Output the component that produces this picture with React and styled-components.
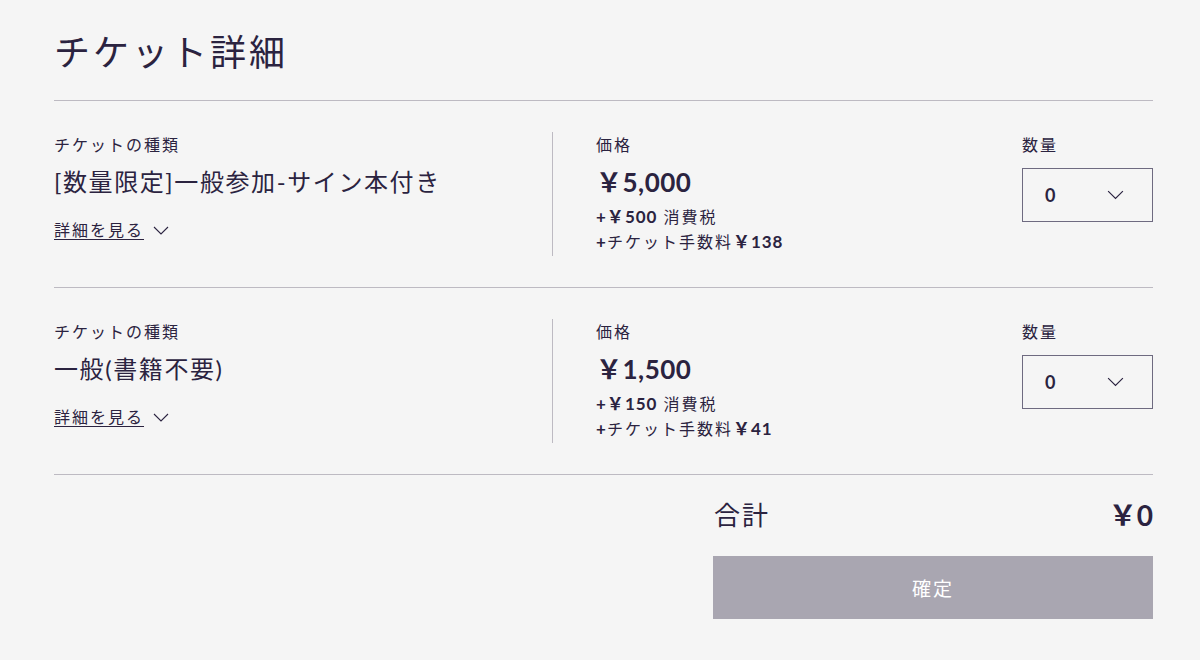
import React from "react";
import styled, { createGlobalStyle } from "styled-components";

const GlobalStyle = createGlobalStyle`
  html, body {
    margin: 0;
    padding: 0;
    background: #f5f5f5;
  }
  body {
    font-family: Lato, "Noto Sans CJK JP", sans-serif;
    color: #2b2340;
  }
`;

const Page = styled.div`
  padding: 0 47px 0 54px;
`;

const Header = styled.div`
  padding-top: 28px;
  border-bottom: 1px solid #bdbac2;
`;

const Title = styled.h1`
  margin: 0;
  font-size: 36px;
  line-height: 48px;
  font-weight: 400;
  letter-spacing: 3px;
  height: 72px;
`;

const Row = styled.div`
  display: flex;
  padding: 31px 0;
  border-bottom: 1px solid #bdbac2;
`;

const TypeCol = styled.div`
  width: 498px;
  height: 124px;
  border-right: 1px solid #bdbac2;
`;

const PriceCol = styled.div`
  flex: 1;
  padding-left: 43px;
`;

const QtyCol = styled.div`
  width: 131px;
`;

const Label = styled.div`
  padding-top: 2px;
  font-size: 16px;
  line-height: 22px;
  letter-spacing: 2px;
`;

const Name = styled.div`
  margin-top: 8px;
  font-size: 24px;
  line-height: 36px;
  letter-spacing: 1.6px;
`;

const Price = styled.div`
  margin-top: 8px;
  font-size: 26px;
  line-height: 36px;
  font-weight: 700;
  letter-spacing: 0.5px;
`;

const Fee = styled.div`
  margin-top: ${({ first }) => (first ? "4px" : "0")};
  font-size: 16px;
  line-height: 25px;
  letter-spacing: 2px;
`;

const Num = styled.b`
  font-size: 17px;
  font-weight: 700;
  letter-spacing: 1px;
`;

const DetailLink = styled.a`
  display: inline-flex;
  align-items: center;
  gap: 9px;
  margin-top: 19px;
  font-size: 16px;
  line-height: 22px;
  letter-spacing: 2px;
  color: #2b2340;
  cursor: pointer;

  span {
    text-decoration: underline;
    text-underline-offset: 3px;
  }
`;

const Select = styled.div`
  box-sizing: border-box;
  margin-top: 12px;
  height: 54px;
  border: 1px solid #6e6a80;
  display: flex;
  align-items: center;
  justify-content: space-between;
  padding: 0 28px 0 22px;
  font-size: 18px;
  font-weight: 700;
`;

const Summary = styled.div`
  margin-left: auto;
  width: 440px;
  padding-top: 22px;
`;

const TotalRow = styled.div`
  display: flex;
  justify-content: space-between;
  align-items: center;
  height: 36px;
  padding-left: 1px;
`;

const TotalLabel = styled.div`
  font-size: 26px;
  line-height: 36px;
  letter-spacing: 2px;
`;

const TotalValue = styled.div`
  font-size: 28px;
  line-height: 36px;
  font-weight: 700;
`;

const Confirm = styled.button`
  display: block;
  width: 100%;
  height: 63px;
  margin-top: 23px;
  border: none;
  background: #a9a6b1;
  color: #fff;
  font-family: Lato, "Noto Sans CJK JP", sans-serif;
  font-size: 19px;
  letter-spacing: 2px;
`;

const Chevron = ({ size = 16 }) => (
  <svg width={size} height={size / 2 + 1} viewBox="0 0 16 9" fill="none">
    <polyline points="1,1 8,8 15,1" stroke="#2b2340" strokeWidth="1.1" />
  </svg>
);

const tickets = [
  { name: "[数量限定]一般参加-サイン本付き", price: "5,000", tax: "500", fee: "138" },
  { name: "一般(書籍不要)", price: "1,500", tax: "150", fee: "41" },
];

export default function App() {
  return (
    <Page>
      <GlobalStyle />
      <Header>
        <Title>チケット詳細</Title>
      </Header>
      {tickets.map((t) => (
        <Row key={t.name}>
          <TypeCol>
            <Label>チケットの種類</Label>
            <Name>{t.name}</Name>
            <DetailLink>
              <span>詳細を見る</span>
              <Chevron size={16} />
            </DetailLink>
          </TypeCol>
          <PriceCol>
            <Label>価格</Label>
            <Price>￥{t.price}</Price>
            <Fee first>
              <Num>+￥{t.tax}</Num> 消費税
            </Fee>
            <Fee>
              <Num>+</Num>チケット手数料<Num>￥{t.fee}</Num>
            </Fee>
          </PriceCol>
          <QtyCol>
            <Label>数量</Label>
            <Select>
              <span>0</span>
              <Chevron size={17} />
            </Select>
          </QtyCol>
        </Row>
      ))}
      <Summary>
        <TotalRow>
          <TotalLabel>合計</TotalLabel>
          <TotalValue>￥0</TotalValue>
        </TotalRow>
        <Confirm>確定</Confirm>
      </Summary>
    </Page>
  );
}
